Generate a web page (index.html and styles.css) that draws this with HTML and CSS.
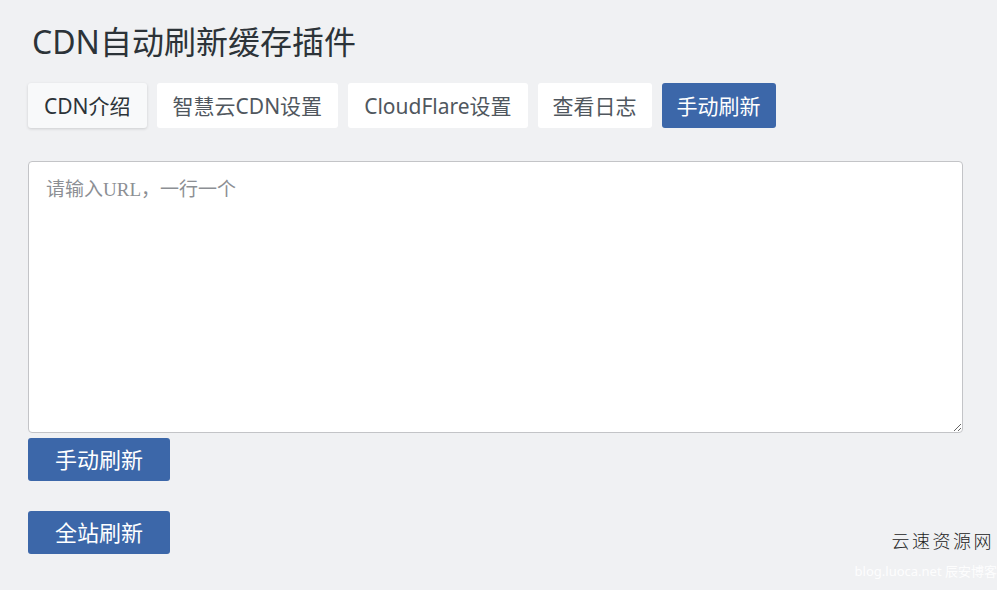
FILE: index.html
```html
<!DOCTYPE html>
<html lang="zh-CN">
<head>
<meta charset="utf-8">
<title>CDN自动刷新缓存插件</title>
<link rel="stylesheet" href="styles.css">
</head>
<body>
<div class="wrap">
  <h1 class="title">CDN自动刷新缓存插件</h1>
  <nav class="tabs">
    <a class="tab tab-current">CDN介绍</a>
    <a class="tab">智慧云CDN设置</a>
    <a class="tab">CloudFlare设置</a>
    <a class="tab tab-narrow">查看日志</a>
    <a class="tab tab-narrow tab-primary">手动刷新</a>
  </nav>
  <form class="form">
    <textarea class="urls" placeholder="请输入URL，一行一个"></textarea>
    <button type="button" class="btn btn-first">手动刷新</button>
    <button type="button" class="btn btn-second">全站刷新</button>
  </form>
</div>
<div class="watermark">
  <div class="wm-site">云速资源网</div>
  <div class="wm-blog">blog.luoca.net 辰安博客</div>
</div>
</body>
</html>
```
FILE: styles.css
```css
html, body {
  margin: 0;
  padding: 0;
  background: #f0f1f3;
  height: 100%;
  overflow: hidden;
}
body {
  font-family: "Noto Sans", "Noto Sans CJK SC", sans-serif;
  color: #1d2327;
}
.wrap {
  padding: 21px 34px 0 28px;
}
.title {
  margin: 0 0 0 4px;
  font-size: 32px;
  line-height: 42px;
  font-weight: 400;
  color: #2c3338;
}
.tabs {
  display: flex;
  gap: 10px;
  margin-top: 20px;
}
.tab {
  display: flex;
  align-items: center;
  height: 45px;
  box-sizing: border-box;
  padding: 0 16px 1px;
  background: #fff;
  border-radius: 3px;
  font-size: 21px;
  color: #50575e;
}
.tab-narrow {
  padding: 0 15px 1px;
}
.tab-current {
  background: #f8f9fa;
  color: #2c3338;
  box-shadow: 0 1px 3px rgba(0,0,0,0.15);
}
.tab-primary {
  background: #3c67a9;
  color: #fff;
}
.form {
  display: flex;
  flex-direction: column;
  align-items: flex-start;
  margin-top: 33px;
}
.urls {
  width: 100%;
  height: 272px;
  box-sizing: border-box;
  border: 1px solid #c3c4c7;
  border-radius: 4px;
  background: #fff;
  padding: 12px 17px;
  font-family: "Liberation Serif", "Noto Sans CJK SC", serif;
  font-size: 19px;
  resize: vertical;
  margin: 0;
}
.urls::placeholder {
  color: #8c8f94;
}
.btn {
  width: 142px;
  height: 43px;
  border: 0;
  border-radius: 3px;
  background: #3c67a9;
  color: #fff;
  font-family: "Noto Sans", "Noto Sans CJK SC", sans-serif;
  font-size: 22px;
  padding: 0 0 3px;
  cursor: pointer;
}
.btn-first {
  margin-top: 5px;
}
.btn-second {
  margin-top: 30px;
}
.watermark {
  position: absolute;
  right: 0;
  bottom: 10px;
  text-align: right;
}
.wm-site {
  font-family: "Noto Sans CJK SC", serif;
  font-weight: 300;
  font-size: 18px;
  line-height: 22px;
  letter-spacing: 2.5px;
  color: #222;
  margin-right: 3px;
}
.wm-blog {
  margin-top: 12px;
  font-size: 13px;
  line-height: 17px;
  color: rgba(255,255,255,0.9);
  font-family: "Noto Sans", "Noto Sans CJK SC", sans-serif;
}
```
